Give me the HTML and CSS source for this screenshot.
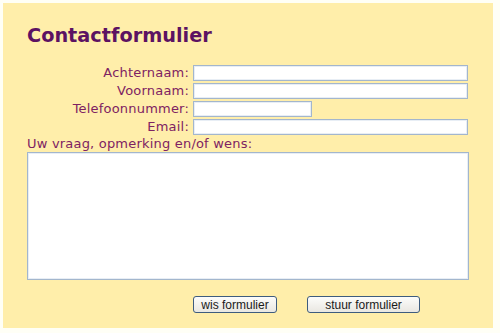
FILE: index.html
```html
<!DOCTYPE html>
<html>
<head>
<meta charset="utf-8">
<link rel="stylesheet" href="styles.css">
</head>
<body>
<div class="panel">
  <h1 class="title">Contactformulier</h1>
  <form class="form">
    <div class="fields">
      <label class="lbl">Achternaam:</label><input class="inp wide" type="text">
      <label class="lbl">Voornaam:</label><input class="inp wide" type="text">
      <label class="lbl">Telefoonnummer:</label><input class="inp short" type="text">
      <label class="lbl">Email:</label><input class="inp wide" type="text">
    </div>
    <div class="qlabel">Uw vraag, opmerking en/of wens:</div>
    <textarea class="area"></textarea>
    <div class="buttons">
      <button type="button" class="btn wis">wis formulier</button>
      <button type="button" class="btn stuur">stuur formulier</button>
    </div>
  </form>
</div>
</body>
</html>
```
FILE: styles.css
```css
html, body {
  margin: 0;
  padding: 0;
  background: #fffff6;
}
.panel {
  margin: 3px;
  width: 490px;
  height: 325px;
  box-sizing: border-box;
  background: #ffeeaa;
  padding: 21px 0 0 24px;
  font-family: "DejaVu Sans", Verdana, sans-serif;
}
.title {
  margin: 0;
  font-size: 19.3px;
  line-height: 24px;
  font-weight: bold;
  color: #5c1262;
}
.form {
  margin: 17px 0 0 0;
}
.fields {
  display: grid;
  grid-template-columns: 162px auto;
  column-gap: 4px;
  row-gap: 2px;
  align-items: center;
  justify-items: start;
}
.lbl {
  justify-self: end;
  font-size: 13px;
  line-height: 16px;
  letter-spacing: 0.2px;
  color: #7e2262;
}
.inp {
  box-sizing: border-box;
  height: 16px;
  margin: 0;
  padding: 0;
  background: #fff;
  border: 1px solid #a3b6cd;
  box-shadow: inset 0 0 0 1px #e8eef5;
}
.wide { width: 275px; }
.short { width: 119px; }
.qlabel {
  font-size: 13px;
  line-height: 16px;
  letter-spacing: 0.2px;
  color: #7e2262;
  margin-top: 1px;
}
.area {
  display: block;
  box-sizing: border-box;
  width: 442px;
  height: 128px;
  margin: 0;
  padding: 0;
  resize: none;
  background: #fff;
  border: 1px solid #a3b6cd;
  box-shadow: inset 0 0 0 1px #e8eef5;
}
.buttons {
  display: flex;
  gap: 30px;
  margin: 16px 0 0 166px;
}
.btn {
  box-sizing: border-box;
  height: 17px;
  margin: 0;
  padding: 0;
  font-family: "Liberation Sans", Arial, sans-serif;
  font-size: 12px;
  line-height: 14px;
  color: #1a1a1a;
  border: 1px solid #3e5c7e;
  border-radius: 3px;
  background: linear-gradient(#fcfcfb, #e9e7e1);
}
.wis { width: 84px; }
.stuur { width: 113px; }
```
